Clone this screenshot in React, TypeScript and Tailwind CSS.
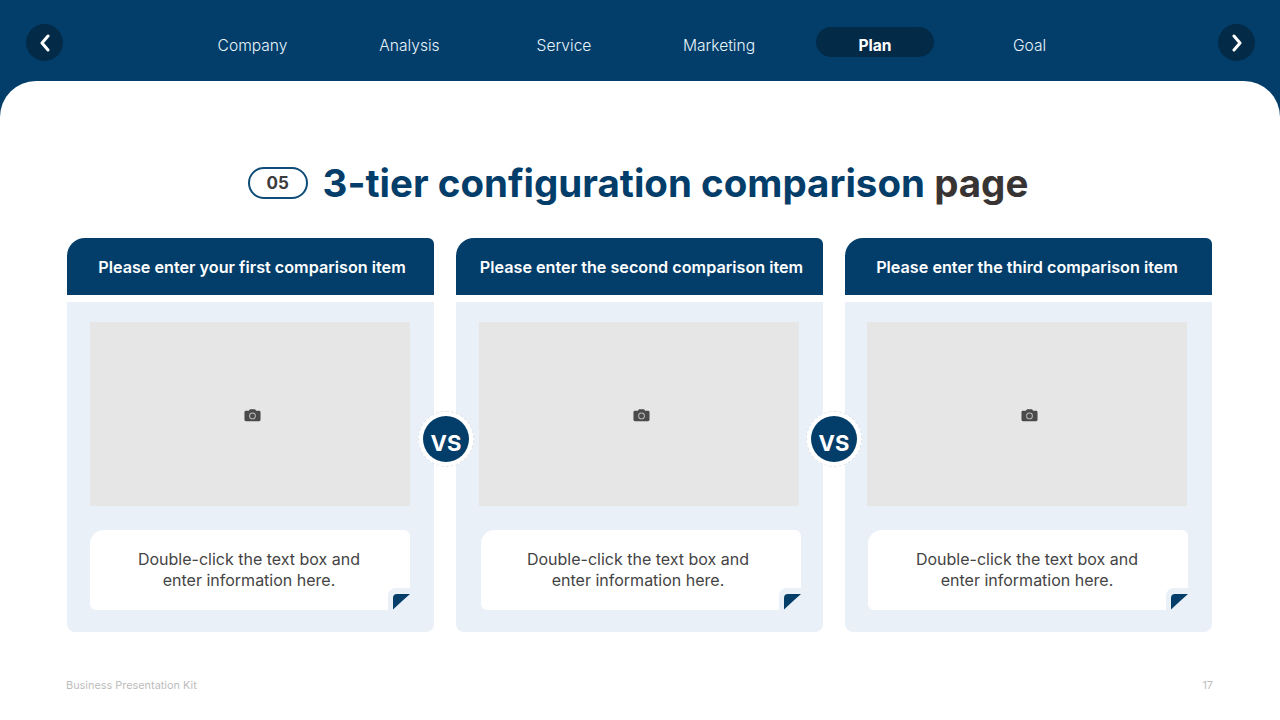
const NAV = ["Company", "Analysis", "Service", "Marketing", "Plan", "Goal"];

const CARDS = [
  { title: "Please enter your first comparison item", titlePad: "pl-[3px]", img: "ml-[23px]", note: "ml-[23px]", textPad: "pr-[2px]", vs: "left-[351px]" },
  { title: "Please enter the second comparison item", titlePad: "pl-[4px]", img: "ml-[23px]", note: "ml-[25px]", textPad: "pr-[6px]", vs: "left-[350px]" },
  { title: "Please enter the third comparison item", titlePad: "pr-[3px]", img: "ml-[22px]", note: "ml-[23px]", textPad: "pr-[2px]", vs: "" },
];

function Arrow({ right }: { right?: boolean }) {
  return (
    <div className="flex h-[37px] w-[37px] items-center justify-center rounded-full bg-[#032a47]">
      <svg width="14" height="18" viewBox="0 0 14 18" fill="none" stroke="#ffffff" strokeWidth="3" strokeLinecap="round" strokeLinejoin="round">
        <path d={right ? "M4 2l6 7-6 7" : "M10 2L4 9l6 7"} />
      </svg>
    </div>
  );
}

function CameraIcon() {
  return (
    <svg width="17" height="14" viewBox="0 0 18 14">
      <path d="M2 2.5h3.2L6.3 1h5.4l1.1 1.5H16a1.5 1.5 0 0 1 1.5 1.5v8a1.5 1.5 0 0 1-1.5 1.5H2A1.5 1.5 0 0 1 .5 12V4A1.5 1.5 0 0 1 2 2.5z" fill="#4a4a4a" />
      <circle cx="9" cy="8" r="3.6" fill="#bdbbbb" />
      <circle cx="9" cy="8" r="2.6" fill="#4a4a4a" />
    </svg>
  );
}

type CardProps = { title: string; titlePad: string; img: string; note: string; textPad: string; vs: string };

function Card({ title, titlePad, img, note, textPad, vs }: CardProps) {
  return (
    <div className="relative w-[367px]">
      <div className={`flex h-[57px] items-center justify-center rounded-tl-[18px] rounded-tr-[6px] bg-[#033e6a] pt-[2px] text-[16.2px] font-semibold text-white ${titlePad}`}>
        {title}
      </div>
      <div className="mt-[7px] flex h-[330px] flex-col rounded-b-[8px] bg-[#e9f0f7] pt-[20px]">
        <div className={`flex h-[184px] w-[320px] items-center justify-center bg-[#e7e6e6] pl-[4px] pt-[1px] ${img}`}>
          <CameraIcon />
        </div>
        <div className={`relative mt-[24px] flex h-[80px] w-[320px] flex-col items-center justify-center rounded-tl-[14px] rounded-tr-[6px] rounded-b-[6px] bg-white text-[16px] leading-[21px] text-[#444444] ${note}`}>
          <div className={textPad}>Double-click the text box and</div>
          <div className={textPad}>enter information here.</div>
          <div className="absolute bottom-0 right-0 flex h-[22px] w-[22px] items-end justify-end rounded-tl-[8px] bg-[#e9f0f7]">
            <svg width="17" height="17" viewBox="0 0 17 17" className="block">
              <path d="M0 16.5V5Q0 1 4 1H17Q9 8 0 16.5z" fill="#033e6a" />
            </svg>
          </div>
        </div>
      </div>
      {vs && (
        <div className={`absolute top-[173px] z-10 flex h-[56px] w-[56px] items-center justify-center rounded-full border border-dashed border-[#dfe4ea] bg-white ${vs}`}>
          <div className="flex h-[46px] w-[46px] items-center justify-center rounded-full bg-[#033e6a] pt-[9px] text-[22px] font-bold text-white">
            VS
          </div>
        </div>
      )}
    </div>
  );
}

export default function App() {
  return (
    <div className="h-[720px] w-[1280px] overflow-hidden bg-[#033e6a] font-['Inter',sans-serif]">
      <header className="flex h-[81px] items-start justify-between pl-[26px] pr-[25px] pt-[24px]">
        <Arrow />
        <nav className="mt-[3px] grid w-[933px] grid-cols-[157px_157px_152px_158px_154px_155px]">
          {NAV.map((n) => (
            <div
              key={n}
              className={
                n === "Plan"
                  ? "mx-auto flex h-[30px] w-[118px] items-center justify-center rounded-[15px] bg-[#032a47] pt-[8px] text-[15.6px] font-bold text-white"
                  : "flex h-[30px] items-center justify-center pt-[8px] text-[15.6px] font-light text-[#e8f4fc]"
              }
            >
              {n}
            </div>
          ))}
        </nav>
        <Arrow right />
      </header>
      <main className="flex h-[639px] flex-col items-center rounded-t-[36px] bg-white pt-[82px]">
        <div className="flex h-[40px] items-center pr-[4px]">
          <div className="flex h-[32px] w-[60px] items-center justify-center rounded-full border-2 border-[#0f4c78] pt-[2px] text-[17px] font-bold text-[#3c3c3c]">
            05
          </div>
          <h1 className="ml-[15px] text-[38.5px] leading-[40px] font-bold text-[#033e6a]">
            3-tier configuration comparison <span className="text-[#383434]">page</span>
          </h1>
        </div>
        <div className="mt-[35px] flex w-full gap-[22px] pl-[67px]">
          {CARDS.map((c) => (
            <Card key={c.title} {...c} />
          ))}
        </div>
        <footer className="mt-[45px] flex w-full justify-between pl-[66px] pr-[67px] text-[10.9px] text-[#bdbdbd]">
          <span>Business Presentation Kit</span>
          <span>17</span>
        </footer>
      </main>
    </div>
  );
}
